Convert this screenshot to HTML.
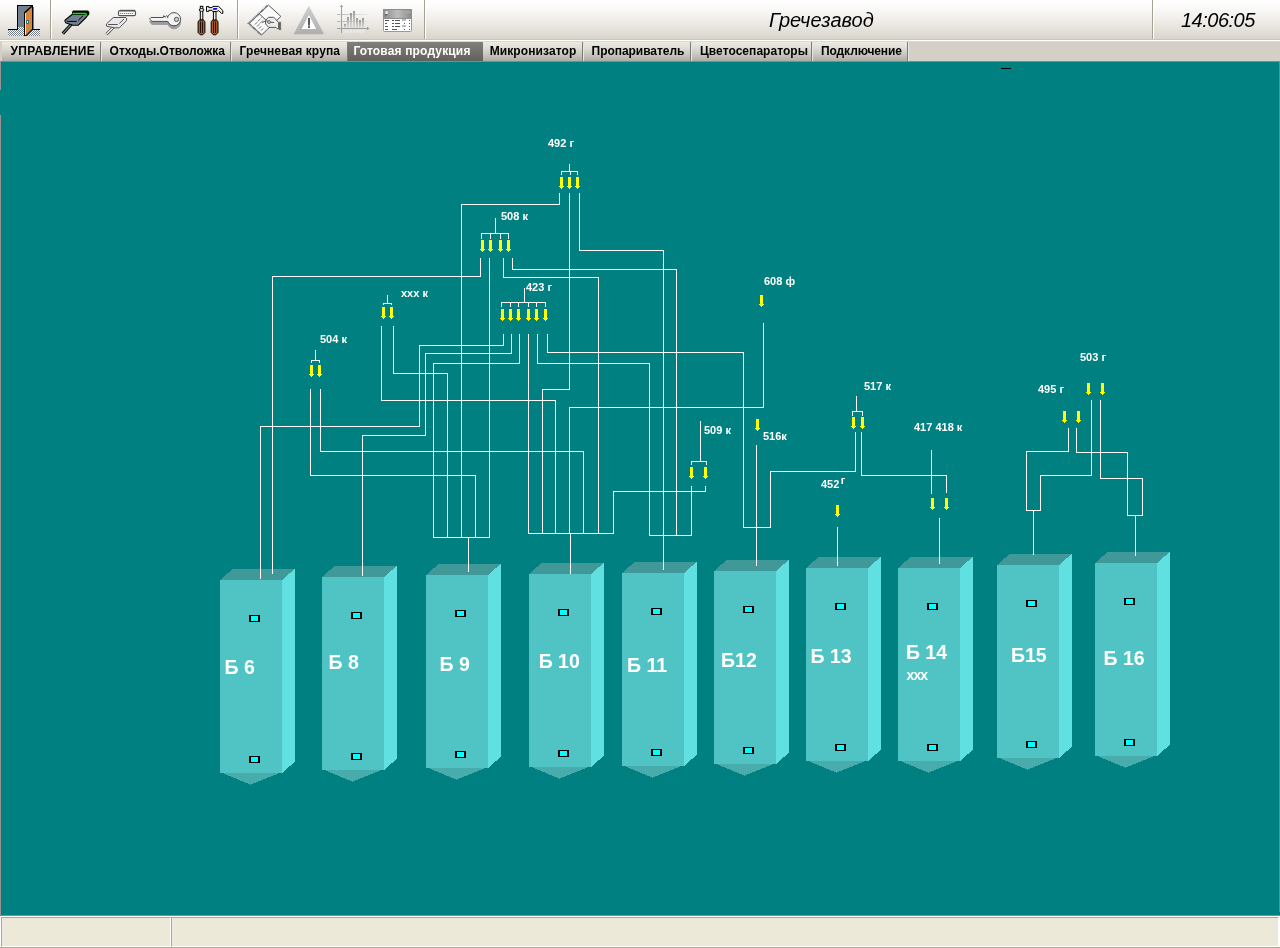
<!DOCTYPE html>
<html lang="ru"><head><meta charset="utf-8"><title>Гречезавод</title>
<style>
html,body{margin:0;padding:0}
body{width:1280px;height:948px;overflow:hidden;position:relative;background:#008080;font-family:"Liberation Sans",sans-serif}
#tb{position:absolute;left:0;top:0;width:1280px;height:39px;background:linear-gradient(#ffffff 0,#fbfaf9 8px,#ece9e4 24px,#d9d5cc 39px)}
#tbline{position:absolute;left:0;top:39px;width:1280px;height:3px;background:linear-gradient(#c9c5b9 0,#c9c5b9 1px,#fff 1px,#fff 2px,#dcd9d2 2px)}
.sep{position:absolute;top:0;width:1px;height:39px;background:#a5a195;box-shadow:1px 0 0 #fff}
#title{will-change:transform;position:absolute;left:769px;top:0;height:39px;line-height:40px;font-style:italic;font-size:20px;color:#000;white-space:nowrap}
#clock{will-change:transform;position:absolute;left:1181px;top:0;height:39px;line-height:40px;font-style:italic;font-size:20px;letter-spacing:-.5px;color:#000;white-space:nowrap}
#tabs{will-change:transform;position:absolute;left:0;top:42px;width:1280px;height:19px;background:#d4d0c8}
#tabline{position:absolute;left:0;top:61px;width:1280px;height:1px;background:#8d8585}
.tab{position:absolute;top:0;height:19px;line-height:18px;font-weight:bold;font-size:12px;color:#000;white-space:nowrap;background:linear-gradient(#eeebde 0,#e2e0d7 5px,#cac8c1 12px,#aeaca6 19px);border-right:1px solid #7b7b78;box-sizing:border-box;box-shadow:1px 0 0 #e8e6e0}
.tab.act{background:linear-gradient(#807f7a,#605f5a);color:#fff;height:20px;border-right:none;box-shadow:none}
.tab span{position:absolute;top:0}
#lb{position:absolute;left:0;top:62px;width:1px;height:853px;background:linear-gradient(#9a9390 0,#9a9390 28px,#008080 28px,#008080 53px,#9a9390 53px)}
svg{will-change:transform}
svg text{fill:#fff;font-weight:bold;font-family:"Liberation Sans",sans-serif}
.big{font-size:19.5px}
.sm{font-size:11px}
#st{position:absolute;left:0;top:915px;width:1280px;height:33px;background:#fff;border-top:1px solid #8d8585;border-bottom:1px solid #aca899;box-sizing:border-box}
.pn{position:absolute;top:1px;height:30px;box-sizing:border-box;background:#ece9d8;border-top:1px solid #aca899;border-left:1px solid #aca899;border-right:1px solid #fff;border-bottom:1px solid #fff}
</style></head><body>
<svg width="1280" height="948" viewBox="0 0 1280 948" shape-rendering="crispEdges" style="position:absolute;left:0;top:0"><polygon points="220,580 232.5,569 294.5,569 282,580" fill="#409898"/><polygon points="220,772 282,772 251,784.5 250,784.5" fill="#48acac"/><polygon points="282,580 294.5,569 294.5,762 282,773" fill="#60e0e0"/><rect x="220" y="580" width="62" height="193" fill="#50c4c4"/><rect x="249" y="615" width="11" height="7" fill="#000"/><rect x="251" y="616" width="7" height="5" fill="#00ffff"/><rect x="249" y="756" width="11" height="7" fill="#000"/><rect x="251" y="757" width="7" height="5" fill="#00ffff"/><polygon points="322,577 334.5,566 396.5,566 384,577" fill="#409898"/><polygon points="322,769 384,769 353,781.5 352,781.5" fill="#48acac"/><polygon points="384,577 396.5,566 396.5,759 384,770" fill="#60e0e0"/><rect x="322" y="577" width="62" height="193" fill="#50c4c4"/><rect x="351" y="612" width="11" height="7" fill="#000"/><rect x="353" y="613" width="7" height="5" fill="#00ffff"/><rect x="351" y="753" width="11" height="7" fill="#000"/><rect x="353" y="754" width="7" height="5" fill="#00ffff"/><polygon points="426,575 438.5,564 500.5,564 488,575" fill="#409898"/><polygon points="426,767 488,767 457,779.5 456,779.5" fill="#48acac"/><polygon points="488,575 500.5,564 500.5,757 488,768" fill="#60e0e0"/><rect x="426" y="575" width="62" height="193" fill="#50c4c4"/><rect x="455" y="610" width="11" height="7" fill="#000"/><rect x="457" y="611" width="7" height="5" fill="#00ffff"/><rect x="455" y="751" width="11" height="7" fill="#000"/><rect x="457" y="752" width="7" height="5" fill="#00ffff"/><polygon points="529,574 541.5,563 603.5,563 591,574" fill="#409898"/><polygon points="529,766 591,766 560,778.5 559,778.5" fill="#48acac"/><polygon points="591,574 603.5,563 603.5,756 591,767" fill="#60e0e0"/><rect x="529" y="574" width="62" height="193" fill="#50c4c4"/><rect x="558" y="609" width="11" height="7" fill="#000"/><rect x="560" y="610" width="7" height="5" fill="#00ffff"/><rect x="558" y="750" width="11" height="7" fill="#000"/><rect x="560" y="751" width="7" height="5" fill="#00ffff"/><polygon points="622,573 634.5,562 696.5,562 684,573" fill="#409898"/><polygon points="622,765 684,765 653,777.5 652,777.5" fill="#48acac"/><polygon points="684,573 696.5,562 696.5,755 684,766" fill="#60e0e0"/><rect x="622" y="573" width="62" height="193" fill="#50c4c4"/><rect x="651" y="608" width="11" height="7" fill="#000"/><rect x="653" y="609" width="7" height="5" fill="#00ffff"/><rect x="651" y="749" width="11" height="7" fill="#000"/><rect x="653" y="750" width="7" height="5" fill="#00ffff"/><polygon points="714,571 726.5,560 788.5,560 776,571" fill="#409898"/><polygon points="714,763 776,763 745,775.5 744,775.5" fill="#48acac"/><polygon points="776,571 788.5,560 788.5,753 776,764" fill="#60e0e0"/><rect x="714" y="571" width="62" height="193" fill="#50c4c4"/><rect x="743" y="606" width="11" height="7" fill="#000"/><rect x="745" y="607" width="7" height="5" fill="#00ffff"/><rect x="743" y="747" width="11" height="7" fill="#000"/><rect x="745" y="748" width="7" height="5" fill="#00ffff"/><polygon points="806,568 818.5,557 880.5,557 868,568" fill="#409898"/><polygon points="806,760 868,760 837,772.5 836,772.5" fill="#48acac"/><polygon points="868,568 880.5,557 880.5,750 868,761" fill="#60e0e0"/><rect x="806" y="568" width="62" height="193" fill="#50c4c4"/><rect x="835" y="603" width="11" height="7" fill="#000"/><rect x="837" y="604" width="7" height="5" fill="#00ffff"/><rect x="835" y="744" width="11" height="7" fill="#000"/><rect x="837" y="745" width="7" height="5" fill="#00ffff"/><polygon points="898,568 910.5,557 972.5,557 960,568" fill="#409898"/><polygon points="898,760 960,760 929,772.5 928,772.5" fill="#48acac"/><polygon points="960,568 972.5,557 972.5,750 960,761" fill="#60e0e0"/><rect x="898" y="568" width="62" height="193" fill="#50c4c4"/><rect x="927" y="603" width="11" height="7" fill="#000"/><rect x="929" y="604" width="7" height="5" fill="#00ffff"/><rect x="927" y="744" width="11" height="7" fill="#000"/><rect x="929" y="745" width="7" height="5" fill="#00ffff"/><polygon points="997,565 1009.5,554 1071.5,554 1059,565" fill="#409898"/><polygon points="997,757 1059,757 1028,769.5 1027,769.5" fill="#48acac"/><polygon points="1059,565 1071.5,554 1071.5,747 1059,758" fill="#60e0e0"/><rect x="997" y="565" width="62" height="193" fill="#50c4c4"/><rect x="1026" y="600" width="11" height="7" fill="#000"/><rect x="1028" y="601" width="7" height="5" fill="#00ffff"/><rect x="1026" y="741" width="11" height="7" fill="#000"/><rect x="1028" y="742" width="7" height="5" fill="#00ffff"/><polygon points="1095,563 1107.5,552 1169.5,552 1157,563" fill="#409898"/><polygon points="1095,755 1157,755 1126,767.5 1125,767.5" fill="#48acac"/><polygon points="1157,563 1169.5,552 1169.5,745 1157,756" fill="#60e0e0"/><rect x="1095" y="563" width="62" height="193" fill="#50c4c4"/><rect x="1124" y="598" width="11" height="7" fill="#000"/><rect x="1126" y="599" width="7" height="5" fill="#00ffff"/><rect x="1124" y="739" width="11" height="7" fill="#000"/><rect x="1126" y="740" width="7" height="5" fill="#00ffff"/><rect x="569" y="164" width="1" height="8" fill="#fff"/><rect x="561" y="171" width="17" height="1" fill="#fff"/><rect x="561" y="171" width="1" height="4" fill="#fff"/><rect x="570" y="171" width="1" height="4" fill="#fff"/><rect x="577" y="171" width="1" height="4" fill="#fff"/><rect x="559" y="193" width="1" height="12" fill="#fff"/><rect x="461" y="204" width="99" height="1" fill="#fff"/><rect x="461" y="204" width="1" height="334" fill="#fff"/><rect x="569" y="193" width="1" height="197" fill="#fff"/><rect x="542" y="389" width="28" height="1" fill="#fff"/><rect x="542" y="389" width="1" height="145" fill="#fff"/><rect x="579" y="193" width="1" height="58" fill="#fff"/><rect x="579" y="250" width="85" height="1" fill="#fff"/><rect x="663" y="250" width="1" height="320" fill="#fff"/><rect x="495" y="218" width="1" height="16" fill="#fff"/><rect x="481" y="233" width="28" height="1" fill="#fff"/><rect x="481" y="233" width="1" height="6" fill="#fff"/><rect x="490" y="233" width="1" height="6" fill="#fff"/><rect x="500" y="233" width="1" height="6" fill="#fff"/><rect x="508" y="233" width="1" height="6" fill="#fff"/><rect x="480" y="258" width="1" height="19" fill="#fff"/><rect x="272" y="276" width="209" height="1" fill="#fff"/><rect x="272" y="276" width="1" height="298" fill="#fff"/><rect x="489" y="258" width="1" height="280" fill="#fff"/><rect x="503" y="258" width="1" height="20" fill="#fff"/><rect x="503" y="277" width="96" height="1" fill="#fff"/><rect x="598" y="277" width="1" height="257" fill="#fff"/><rect x="512" y="258" width="1" height="12" fill="#fff"/><rect x="512" y="269" width="165" height="1" fill="#fff"/><rect x="676" y="269" width="1" height="267" fill="#fff"/><rect x="387" y="295" width="1" height="9" fill="#fff"/><rect x="383" y="303" width="9" height="1" fill="#fff"/><rect x="383" y="303" width="1" height="2" fill="#fff"/><rect x="391" y="303" width="1" height="2" fill="#fff"/><rect x="381" y="326" width="1" height="75" fill="#fff"/><rect x="381" y="400" width="175" height="1" fill="#fff"/><rect x="555" y="400" width="1" height="134" fill="#fff"/><rect x="393" y="326" width="1" height="48" fill="#fff"/><rect x="393" y="373" width="55" height="1" fill="#fff"/><rect x="447" y="373" width="1" height="165" fill="#fff"/><rect x="524" y="288" width="1" height="15" fill="#fff"/><rect x="501" y="302" width="45" height="1" fill="#fff"/><rect x="501" y="302" width="1" height="5" fill="#fff"/><rect x="510" y="302" width="1" height="5" fill="#fff"/><rect x="518" y="302" width="1" height="5" fill="#fff"/><rect x="528" y="302" width="1" height="5" fill="#fff"/><rect x="536" y="302" width="1" height="5" fill="#fff"/><rect x="545" y="302" width="1" height="5" fill="#fff"/><rect x="503" y="334" width="1" height="12" fill="#fff"/><rect x="419" y="345" width="85" height="1" fill="#fff"/><rect x="419" y="345" width="1" height="82" fill="#fff"/><rect x="260" y="426" width="160" height="1" fill="#fff"/><rect x="260" y="426" width="1" height="153" fill="#fff"/><rect x="511" y="334" width="1" height="20" fill="#fff"/><rect x="425" y="353" width="87" height="1" fill="#fff"/><rect x="425" y="353" width="1" height="83" fill="#fff"/><rect x="362" y="435" width="64" height="1" fill="#fff"/><rect x="362" y="435" width="1" height="141" fill="#fff"/><rect x="519" y="334" width="1" height="30" fill="#fff"/><rect x="433" y="363" width="87" height="1" fill="#fff"/><rect x="433" y="363" width="1" height="175" fill="#fff"/><rect x="528" y="334" width="1" height="200" fill="#fff"/><rect x="537" y="334" width="1" height="30" fill="#fff"/><rect x="537" y="363" width="113" height="1" fill="#fff"/><rect x="649" y="363" width="1" height="173" fill="#fff"/><rect x="547" y="334" width="1" height="19" fill="#fff"/><rect x="547" y="352" width="197" height="1" fill="#fff"/><rect x="743" y="352" width="1" height="176" fill="#fff"/><rect x="743" y="527" width="28" height="1" fill="#fff"/><rect x="770" y="471" width="1" height="57" fill="#fff"/><rect x="770" y="471" width="86" height="1" fill="#fff"/><rect x="855" y="432" width="1" height="40" fill="#fff"/><rect x="315" y="350" width="1" height="11" fill="#fff"/><rect x="311" y="360" width="9" height="1" fill="#fff"/><rect x="311" y="360" width="1" height="3" fill="#fff"/><rect x="319" y="360" width="1" height="3" fill="#fff"/><rect x="310" y="389" width="1" height="87" fill="#fff"/><rect x="310" y="475" width="166" height="1" fill="#fff"/><rect x="475" y="475" width="1" height="63" fill="#fff"/><rect x="320" y="389" width="1" height="63" fill="#fff"/><rect x="320" y="451" width="264" height="1" fill="#fff"/><rect x="583" y="451" width="1" height="83" fill="#fff"/><rect x="763" y="323" width="1" height="85" fill="#fff"/><rect x="569" y="407" width="195" height="1" fill="#fff"/><rect x="569" y="407" width="1" height="127" fill="#fff"/><rect x="528" y="533" width="86" height="1" fill="#fff"/><rect x="570" y="533" width="1" height="41" fill="#fff"/><rect x="613" y="491" width="1" height="43" fill="#fff"/><rect x="613" y="491" width="93" height="1" fill="#fff"/><rect x="705" y="486" width="1" height="6" fill="#fff"/><rect x="700" y="421" width="1" height="41" fill="#fff"/><rect x="691" y="461" width="16" height="1" fill="#fff"/><rect x="691" y="461" width="1" height="4" fill="#fff"/><rect x="706" y="461" width="1" height="4" fill="#fff"/><rect x="691" y="486" width="1" height="50" fill="#fff"/><rect x="649" y="535" width="43" height="1" fill="#fff"/><rect x="433" y="537" width="57" height="1" fill="#fff"/><rect x="468" y="537" width="1" height="35" fill="#fff"/><rect x="756" y="445" width="1" height="121" fill="#fff"/><rect x="837" y="527" width="1" height="39" fill="#fff"/><rect x="856" y="396" width="1" height="16" fill="#fff"/><rect x="852" y="411" width="11" height="1" fill="#fff"/><rect x="852" y="411" width="1" height="5" fill="#fff"/><rect x="862" y="411" width="1" height="5" fill="#fff"/><rect x="861" y="432" width="1" height="44" fill="#fff"/><rect x="861" y="475" width="86" height="1" fill="#fff"/><rect x="946" y="475" width="1" height="18" fill="#fff"/><rect x="931" y="450" width="1" height="44" fill="#fff"/><rect x="939" y="518" width="1" height="46" fill="#fff"/><rect x="1068" y="428" width="1" height="24" fill="#fff"/><rect x="1026" y="451" width="43" height="1" fill="#fff"/><rect x="1026" y="451" width="1" height="60" fill="#fff"/><rect x="1026" y="510" width="15" height="1" fill="#fff"/><rect x="1040" y="475" width="1" height="36" fill="#fff"/><rect x="1040" y="475" width="52" height="1" fill="#fff"/><rect x="1091" y="400" width="1" height="76" fill="#fff"/><rect x="1076" y="428" width="1" height="25" fill="#fff"/><rect x="1076" y="452" width="52" height="1" fill="#fff"/><rect x="1127" y="452" width="1" height="64" fill="#fff"/><rect x="1127" y="515" width="16" height="1" fill="#fff"/><rect x="1142" y="478" width="1" height="38" fill="#fff"/><rect x="1100" y="478" width="43" height="1" fill="#fff"/><rect x="1100" y="400" width="1" height="79" fill="#fff"/><rect x="1033" y="510" width="1" height="45" fill="#fff"/><rect x="1135" y="515" width="1" height="41" fill="#fff"/><rect x="560" y="177" width="3" height="9" fill="#ffff00"/><rect x="559" y="186" width="5" height="1" fill="#ffff00"/><rect x="560" y="187" width="3" height="1" fill="#ffff00"/><rect x="561" y="188" width="1" height="1" fill="#ffff00"/><rect x="568" y="177" width="3" height="9" fill="#ffff00"/><rect x="567" y="186" width="5" height="1" fill="#ffff00"/><rect x="568" y="187" width="3" height="1" fill="#ffff00"/><rect x="569" y="188" width="1" height="1" fill="#ffff00"/><rect x="576" y="177" width="3" height="9" fill="#ffff00"/><rect x="575" y="186" width="5" height="1" fill="#ffff00"/><rect x="576" y="187" width="3" height="1" fill="#ffff00"/><rect x="577" y="188" width="1" height="1" fill="#ffff00"/><rect x="481" y="240" width="3" height="9" fill="#ffff00"/><rect x="480" y="249" width="5" height="1" fill="#ffff00"/><rect x="481" y="250" width="3" height="1" fill="#ffff00"/><rect x="482" y="251" width="1" height="1" fill="#ffff00"/><rect x="489" y="240" width="3" height="9" fill="#ffff00"/><rect x="488" y="249" width="5" height="1" fill="#ffff00"/><rect x="489" y="250" width="3" height="1" fill="#ffff00"/><rect x="490" y="251" width="1" height="1" fill="#ffff00"/><rect x="499" y="240" width="3" height="9" fill="#ffff00"/><rect x="498" y="249" width="5" height="1" fill="#ffff00"/><rect x="499" y="250" width="3" height="1" fill="#ffff00"/><rect x="500" y="251" width="1" height="1" fill="#ffff00"/><rect x="507" y="240" width="3" height="9" fill="#ffff00"/><rect x="506" y="249" width="5" height="1" fill="#ffff00"/><rect x="507" y="250" width="3" height="1" fill="#ffff00"/><rect x="508" y="251" width="1" height="1" fill="#ffff00"/><rect x="382" y="307" width="3" height="9" fill="#ffff00"/><rect x="381" y="316" width="5" height="1" fill="#ffff00"/><rect x="382" y="317" width="3" height="1" fill="#ffff00"/><rect x="383" y="318" width="1" height="1" fill="#ffff00"/><rect x="390" y="307" width="3" height="9" fill="#ffff00"/><rect x="389" y="316" width="5" height="1" fill="#ffff00"/><rect x="390" y="317" width="3" height="1" fill="#ffff00"/><rect x="391" y="318" width="1" height="1" fill="#ffff00"/><rect x="501" y="309" width="3" height="9" fill="#ffff00"/><rect x="500" y="318" width="5" height="1" fill="#ffff00"/><rect x="501" y="319" width="3" height="1" fill="#ffff00"/><rect x="502" y="320" width="1" height="1" fill="#ffff00"/><rect x="509" y="309" width="3" height="9" fill="#ffff00"/><rect x="508" y="318" width="5" height="1" fill="#ffff00"/><rect x="509" y="319" width="3" height="1" fill="#ffff00"/><rect x="510" y="320" width="1" height="1" fill="#ffff00"/><rect x="517" y="309" width="3" height="9" fill="#ffff00"/><rect x="516" y="318" width="5" height="1" fill="#ffff00"/><rect x="517" y="319" width="3" height="1" fill="#ffff00"/><rect x="518" y="320" width="1" height="1" fill="#ffff00"/><rect x="527" y="309" width="3" height="9" fill="#ffff00"/><rect x="526" y="318" width="5" height="1" fill="#ffff00"/><rect x="527" y="319" width="3" height="1" fill="#ffff00"/><rect x="528" y="320" width="1" height="1" fill="#ffff00"/><rect x="535" y="309" width="3" height="9" fill="#ffff00"/><rect x="534" y="318" width="5" height="1" fill="#ffff00"/><rect x="535" y="319" width="3" height="1" fill="#ffff00"/><rect x="536" y="320" width="1" height="1" fill="#ffff00"/><rect x="544" y="309" width="3" height="9" fill="#ffff00"/><rect x="543" y="318" width="5" height="1" fill="#ffff00"/><rect x="544" y="319" width="3" height="1" fill="#ffff00"/><rect x="545" y="320" width="1" height="1" fill="#ffff00"/><rect x="310" y="365" width="3" height="9" fill="#ffff00"/><rect x="309" y="374" width="5" height="1" fill="#ffff00"/><rect x="310" y="375" width="3" height="1" fill="#ffff00"/><rect x="311" y="376" width="1" height="1" fill="#ffff00"/><rect x="318" y="365" width="3" height="9" fill="#ffff00"/><rect x="317" y="374" width="5" height="1" fill="#ffff00"/><rect x="318" y="375" width="3" height="1" fill="#ffff00"/><rect x="319" y="376" width="1" height="1" fill="#ffff00"/><rect x="760" y="295" width="3" height="9" fill="#ffff00"/><rect x="759" y="304" width="5" height="1" fill="#ffff00"/><rect x="760" y="305" width="3" height="1" fill="#ffff00"/><rect x="761" y="306" width="1" height="1" fill="#ffff00"/><rect x="690" y="467" width="3" height="9" fill="#ffff00"/><rect x="689" y="476" width="5" height="1" fill="#ffff00"/><rect x="690" y="477" width="3" height="1" fill="#ffff00"/><rect x="691" y="478" width="1" height="1" fill="#ffff00"/><rect x="704" y="467" width="3" height="9" fill="#ffff00"/><rect x="703" y="476" width="5" height="1" fill="#ffff00"/><rect x="704" y="477" width="3" height="1" fill="#ffff00"/><rect x="705" y="478" width="1" height="1" fill="#ffff00"/><rect x="756" y="419" width="3" height="9" fill="#ffff00"/><rect x="755" y="428" width="5" height="1" fill="#ffff00"/><rect x="756" y="429" width="3" height="1" fill="#ffff00"/><rect x="757" y="430" width="1" height="1" fill="#ffff00"/><rect x="836" y="505" width="3" height="9" fill="#ffff00"/><rect x="835" y="514" width="5" height="1" fill="#ffff00"/><rect x="836" y="515" width="3" height="1" fill="#ffff00"/><rect x="837" y="516" width="1" height="1" fill="#ffff00"/><rect x="852" y="417" width="3" height="9" fill="#ffff00"/><rect x="851" y="426" width="5" height="1" fill="#ffff00"/><rect x="852" y="427" width="3" height="1" fill="#ffff00"/><rect x="853" y="428" width="1" height="1" fill="#ffff00"/><rect x="861" y="417" width="3" height="9" fill="#ffff00"/><rect x="860" y="426" width="5" height="1" fill="#ffff00"/><rect x="861" y="427" width="3" height="1" fill="#ffff00"/><rect x="862" y="428" width="1" height="1" fill="#ffff00"/><rect x="931" y="498" width="3" height="9" fill="#ffff00"/><rect x="930" y="507" width="5" height="1" fill="#ffff00"/><rect x="931" y="508" width="3" height="1" fill="#ffff00"/><rect x="932" y="509" width="1" height="1" fill="#ffff00"/><rect x="945" y="498" width="3" height="9" fill="#ffff00"/><rect x="944" y="507" width="5" height="1" fill="#ffff00"/><rect x="945" y="508" width="3" height="1" fill="#ffff00"/><rect x="946" y="509" width="1" height="1" fill="#ffff00"/><rect x="1063" y="411" width="3" height="9" fill="#ffff00"/><rect x="1062" y="420" width="5" height="1" fill="#ffff00"/><rect x="1063" y="421" width="3" height="1" fill="#ffff00"/><rect x="1064" y="422" width="1" height="1" fill="#ffff00"/><rect x="1077" y="411" width="3" height="9" fill="#ffff00"/><rect x="1076" y="420" width="5" height="1" fill="#ffff00"/><rect x="1077" y="421" width="3" height="1" fill="#ffff00"/><rect x="1078" y="422" width="1" height="1" fill="#ffff00"/><rect x="1087" y="383" width="3" height="9" fill="#ffff00"/><rect x="1086" y="392" width="5" height="1" fill="#ffff00"/><rect x="1087" y="393" width="3" height="1" fill="#ffff00"/><rect x="1088" y="394" width="1" height="1" fill="#ffff00"/><rect x="1101" y="383" width="3" height="9" fill="#ffff00"/><rect x="1100" y="392" width="5" height="1" fill="#ffff00"/><rect x="1101" y="393" width="3" height="1" fill="#ffff00"/><rect x="1102" y="394" width="1" height="1" fill="#ffff00"/><rect x="1001" y="68" width="10" height="1" fill="#000"/><text x="224.5" y="674" class="big">Б 6</text><text x="328.6" y="669" class="big">Б 8</text><text x="439.6" y="671" class="big">Б 9</text><text x="538.7" y="668" class="big">Б 10</text><text x="627" y="672" class="big">Б 11</text><text x="721.1" y="667" class="big">Б12</text><text x="810.6" y="663" class="big">Б 13</text><text x="905.9" y="659" class="big">Б 14</text><text x="1011" y="662" class="big">Б15</text><text x="1103.6" y="665" class="big">Б 16</text><text x="906.6" y="680" style="font-size:14px;letter-spacing:-.9px">ххх</text><text x="548" y="147" class="sm">492 г</text><text x="501" y="220" class="sm">508 к</text><text x="401" y="297" class="sm">ххх к</text><text x="526" y="291" class="sm">423 г</text><text x="320" y="343" class="sm">504 к</text><text x="764" y="285" class="sm">608 ф</text><text x="704" y="434" class="sm">509 к</text><text x="763" y="440" class="sm">516к</text><text x="821" y="488" class="sm">452<tspan dx="1.5" dy="-4">г</tspan></text><text x="864" y="390" class="sm">517 к</text><text x="914" y="431" class="sm">417 418 к</text><text x="1038" y="393" class="sm">495 г</text><text x="1080" y="361" class="sm">503 г</text></svg>
<div id="tb"></div><div id="tbline"></div>
<div class="sep" style="left:50px"></div><div class="sep" style="left:237px"></div><div class="sep" style="left:424px"></div><div class="sep" style="left:1152px"></div>
<svg width="430" height="40" viewBox="0 0 430 40" style="position:absolute;left:0;top:0"><defs><pattern id="chk" width="2" height="2" patternUnits="userSpaceOnUse"><rect width="2" height="2" fill="#fff"/><rect width="1" height="1" fill="#708090"/><rect x="1" y="1" width="1" height="1" fill="#708090"/></pattern><linearGradient id="gw" x1="0" y1="0" x2="0" y2="1"><stop offset="0" stop-color="#d0d0d0"/><stop offset="1" stop-color="#aeaeae"/></linearGradient><linearGradient id="gb" x1="0" y1="0" x2="0" y2="1"><stop offset="0" stop-color="#858585"/><stop offset="1" stop-color="#dcdcdc"/></linearGradient><linearGradient id="gt" x1="0" y1="0" x2="1" y2="0"><stop offset="0" stop-color="#8c8c8c"/><stop offset=".5" stop-color="#bdbdbd"/><stop offset="1" stop-color="#8c8c8c"/></linearGradient><linearGradient id="gl" x1="0" y1="0" x2="1" y2="0"><stop offset="0" stop-color="#9a9a9a"/><stop offset="1" stop-color="#e8e8e8"/></linearGradient></defs><g shape-rendering="crispEdges"><rect x="8" y="30" width="32" height="6" fill="url(#chk)"/><rect x="18" y="27" width="7" height="3" fill="url(#chk)"/><rect x="18" y="6" width="14" height="21" fill="#708090"/><rect x="17" y="5" width="16" height="1" fill="#000"/><rect x="17" y="5" width="1" height="25" fill="#000"/><rect x="33" y="7" width="1" height="22" fill="#708090"/><rect x="8" y="29" width="10" height="1" fill="#000"/><rect x="33" y="29" width="7" height="1" fill="#000"/></g><polygon points="24,12.3 32.3,5 33,5 33,29.6 26.5,36 24,36" fill="#000"/><polygon points="25,13.4 32,7 32,29 26,35 25,35" fill="#d2873c"/><polygon points="25,13.4 26,12.5 26,35 25,35" fill="#ffe2ad"/><rect x="26" y="20" width="3" height="4" rx="1" fill="#2a6a72"/><rect x="27" y="21" width="1" height="2" fill="#fff"/><line x1="72.5" y1="23" x2="62.8" y2="33.6" stroke="#000" stroke-width="3.2"/><line x1="72.5" y1="23" x2="62.8" y2="33.6" stroke="#708090" stroke-width="1.3"/><polygon points="72,14.5 86.5,14.5 86.5,17 78.3,25.2 73,25.2 66,23 65,21.5 65,20.2" fill="#708090" stroke="#000" stroke-width="1.1" stroke-linejoin="round"/><polygon points="73,10.6 88,10.6 89.3,12 89.3,14.5 87,17 85.6,14.6 72,14.6 72,12" fill="#000"/><polyline points="72.5,13.4 85.6,13.4 86.8,15.6" fill="none" stroke="#00f000" stroke-width="1.5"/><line x1="67" y1="21.4" x2="76.8" y2="21.4" stroke="#000" stroke-width="1"/><line x1="78.3" y1="20.3" x2="83" y2="15.8" stroke="#000" stroke-width="1"/><g stroke="#555" fill="#e9e9e9" stroke-width="1"><line x1="115" y1="25.5" x2="106.5" y2="34.2" stroke="#555" stroke-width="3"/><line x1="115" y1="25.5" x2="106.5" y2="34.2" stroke="#fff" stroke-width="1.2"/><polygon points="113.3,17.5 126,17.5 126.6,18.2 126.6,20.6 119.3,27.8 114,27.8 106.6,26.2 106.4,24"/><line x1="108" y1="24.5" x2="117.7" y2="24.5"/><line x1="119.3" y1="23.5" x2="124" y2="19"/><rect x="118.5" y="10.7" width="17" height="5" rx="1.5" fill="#fff" stroke-width="1.2"/><line x1="120" y1="10.6" x2="135" y2="10.6" stroke-width="1.6"/><line x1="120.2" y1="13.5" x2="134" y2="13.5" stroke-dasharray="1 1" stroke-width="1"/></g><g><g fill="#9c9c9c" stroke="#9c9c9c" stroke-width="1" transform="translate(0,3)"><circle cx="174" cy="19.2" r="6.6"/><polygon points="149.5,19 151,17.5 163.5,17.5 164,15.8 165.5,17.3 167,15.8 168,17.4 168,21.4 152,21.4"/></g><g fill="#f4f4f4" stroke="#4e4e4e" stroke-width="1"><polygon points="149.5,19 151,17.5 163.2,17.5 163.8,15.6 165.2,17.3 166.8,15.6 168.5,17.4 168.5,21.4 152,21.4"/><circle cx="174" cy="19.2" r="6.6"/><rect x="166.5" y="18.1" width="3" height="2.8" fill="#f4f4f4" stroke="none"/><circle cx="176.5" cy="19.4" r="2.1" fill="#d0d0d0"/></g></g><path d="M198.1,21.5 L199.9,19.8 L203.1,19.8 L204.9,21.5 L204.9,32.5 L202.7,34.8 L200.3,34.8 L198.1,32.5 Z" fill="#b05a2c" stroke="#000" stroke-width="1"/><line x1="200.5" y1="21.5" x2="200.5" y2="33" stroke="#000" stroke-width=".8"/><line x1="202.5" y1="21.5" x2="202.5" y2="33" stroke="#000" stroke-width=".8"/><path d="M211.2,21.5 L213.0,19.8 L216.2,19.8 L218.0,21.5 L218.0,32.5 L215.79999999999998,34.8 L213.4,34.8 L211.2,32.5 Z" fill="#b05a2c" stroke="#000" stroke-width="1"/><line x1="213.6" y1="21.5" x2="213.6" y2="33" stroke="#000" stroke-width=".8"/><line x1="215.6" y1="21.5" x2="215.6" y2="33" stroke="#000" stroke-width=".8"/><rect x="200.3" y="6.3" width="2.5" height="13.5" fill="#eee" stroke="#000" stroke-width="1"/><rect x="199.3" y="8.8" width="4.5" height="2.2" rx="1" fill="#eee" stroke="#000" stroke-width="1"/><rect x="200.8" y="9.2" width="1.5" height="1.6" fill="#eee"/><rect x="213.4" y="11.5" width="2.6" height="8.5" fill="#eee" stroke="#000" stroke-width="1"/><path d="M206.5,6.5 L208.8,6.5 L208.8,7.6 L212.2,7.6 L212.8,6.4 L218.6,6.4 L222.8,10.5 L222.8,13.4 L221.6,13.4 L218.6,10.6 L216.6,11.6 L212.8,11.6 L212,10.3 L208.8,10.3 L208.8,11.4 L206.5,11.4 Z" fill="#efefef" stroke="#000" stroke-width="1" stroke-linejoin="round"/><polygon points="213.4,8 217.4,8 216.6,9.8 212.8,9.8" fill="#0000ff"/><g stroke="#555" stroke-width="1" fill="#fafafa"><polygon points="268.4,5 280.9,16.4 261.6,34.9 249,23.4"/><polyline points="267.4,5.6 248.6,23.4 261,34.6" fill="none" stroke="#777" stroke-dasharray="1 .8" stroke-width="2"/><line x1="259" y1="13.5" x2="268" y2="22"/><g stroke-width=".9" stroke-dasharray="3 1.2"><line x1="255" y1="24.5" x2="261.5" y2="17.5"/><line x1="257" y1="26.5" x2="263.5" y2="19.8"/><line x1="259" y1="28.6" x2="262" y2="25.6"/><line x1="261" y1="30.6" x2="264" y2="27.6"/></g><polygon points="265.6,20.3 268.4,17.3 273.8,17.3 278.6,22.4 278.6,28.6 277,28.6 276,27.4 268.8,27.4 265.6,24" fill="#ececec"/><rect x="279" y="22.2" width="1.8" height="7.6" fill="#666" stroke="#666" stroke-width=".6"/><circle cx="269" cy="22" r="1.4" fill="#fff"/><line x1="270.4" y1="22.4" x2="274" y2="22.4"/><line x1="262" y1="22.4" x2="267.4" y2="20.6"/></g><polygon points="308.8,6.6 323.4,33.8 294.4,33.8" fill="url(#gw)" stroke="url(#gw)" stroke-width="1" stroke-linejoin="round"/><polygon points="308.9,15 316.2,29 301.7,29" fill="#fff"/><rect x="308" y="18" width="2" height="7.6" fill="#5a5a5a"/><rect x="308" y="26.2" width="2" height="1.7" fill="#4a4a4a"/><g shape-rendering="crispEdges" opacity=".8"><rect x="337" y="14" width="32" height="1" fill="url(#gl)" opacity=".8"/><rect x="337" y="21" width="32" height="1" fill="url(#gl)" opacity=".8"/><rect x="344" y="24" width="2" height="4" fill="url(#gb)"/><rect x="344" y="30" width="2" height="3" fill="#ececec"/><rect x="347" y="17" width="2" height="11" fill="url(#gb)"/><rect x="347" y="30" width="2" height="3" fill="#ececec"/><rect x="350" y="13" width="2" height="15" fill="url(#gb)"/><rect x="350" y="30" width="2" height="3" fill="#ececec"/><rect x="353" y="11" width="2" height="17" fill="url(#gb)"/><rect x="353" y="30" width="2" height="3" fill="#ececec"/><rect x="356" y="18" width="2" height="10" fill="url(#gb)"/><rect x="356" y="30" width="2" height="3" fill="#ececec"/><rect x="359" y="20" width="2" height="8" fill="url(#gb)"/><rect x="359" y="30" width="2" height="3" fill="#ececec"/><rect x="362" y="18" width="2" height="10" fill="url(#gb)"/><rect x="362" y="30" width="2" height="3" fill="#ececec"/><rect x="341" y="6" width="1" height="27" fill="#8c8c8c"/><rect x="337" y="28" width="31" height="1" fill="#8c8c8c"/></g><polygon points="341.5,4.8 343.2,7 339.8,7" fill="#9a9a9a"/><polygon points="369.4,28.5 367,26.8 367,30.2" fill="#9a9a9a"/><rect x="383.5" y="9.5" width="28" height="22" rx="1" fill="#fff" stroke="#999" stroke-width="1"/><rect x="383.5" y="9.5" width="28" height="9" fill="url(#gt)" stroke="#8e8e8e" stroke-width="1"/><rect x="385.3" y="11" width="2.6" height="3.4" rx="1" fill="#e6e6e6"/><path d="M385,15 l2.4,-.4" stroke="#444" stroke-width="1"/><rect x="404" y="11.3" width="6.5" height="1.8" fill="#a9a9a9"/><g fill="#555" shape-rendering="crispEdges"><rect x="385" y="20" width="4" height="1"/><rect x="392" y="20" width="2" height="1"/><rect x="395" y="20" width="5" height="1"/><rect x="404" y="20" width="1" height="1"/><rect x="409" y="20" width="1" height="1"/><rect x="385" y="23" width="2" height="1"/><rect x="392" y="23" width="2" height="1"/><rect x="395" y="23" width="5" height="1"/><rect x="404" y="23" width="1" height="1"/><rect x="409" y="23" width="1" height="1"/><rect x="385" y="26" width="3" height="1"/><rect x="392" y="26" width="2" height="1"/><rect x="395" y="26" width="5" height="1"/><rect x="404" y="26" width="1" height="1"/><rect x="409" y="26" width="1" height="1"/><rect x="385" y="29" width="3" height="1"/><rect x="392" y="29" width="5" height="1"/><rect x="404" y="29" width="1" height="1"/><rect x="409" y="29" width="1" height="1"/><rect x="402" y="19" width="4" height="2" fill="#bbb"/><rect x="402" y="25" width="4" height="2" fill="#bbb"/></g></svg>
<div id="title">Гречезавод</div><div id="clock">14:06:05</div>
<div id="tabs">
<div class="tab" style="left:2px;width:99px"><span style="left:8.6px;letter-spacing:.25px">УПРАВЛЕНИЕ</span></div>
<div class="tab" style="left:102px;width:129px"><span style="left:7.6px">Отходы.Отволожка</span></div>
<div class="tab" style="left:232px;width:116px"><span style="left:7.6px;letter-spacing:.1px">Гречневая крупа</span></div>
<div class="tab act" style="left:348px;width:135px"><span style="left:5.4px;letter-spacing:.16px">Готовая продукция</span></div>
<div class="tab" style="left:483px;width:100px"><span style="left:6.7px;letter-spacing:.1px">Микронизатор</span></div>
<div class="tab" style="left:584px;width:107px"><span style="left:7.6px;letter-spacing:-.05px">Пропариватель</span></div>
<div class="tab" style="left:692px;width:120px"><span style="left:8px;letter-spacing:.05px">Цветосепараторы</span></div>
<div class="tab" style="left:813px;width:95px"><span style="left:8px;letter-spacing:-.1px">Подключение</span></div>
</div>
<div id="tabline"></div>
<div id="lb"></div><div style="position:absolute;left:1279px;top:62px;width:1px;height:850px;background:#857f7f"></div>
<div id="st"><div class="pn" style="left:1px;width:170px"></div><div class="pn" style="left:171px;width:1108px"></div></div>
</body></html>
